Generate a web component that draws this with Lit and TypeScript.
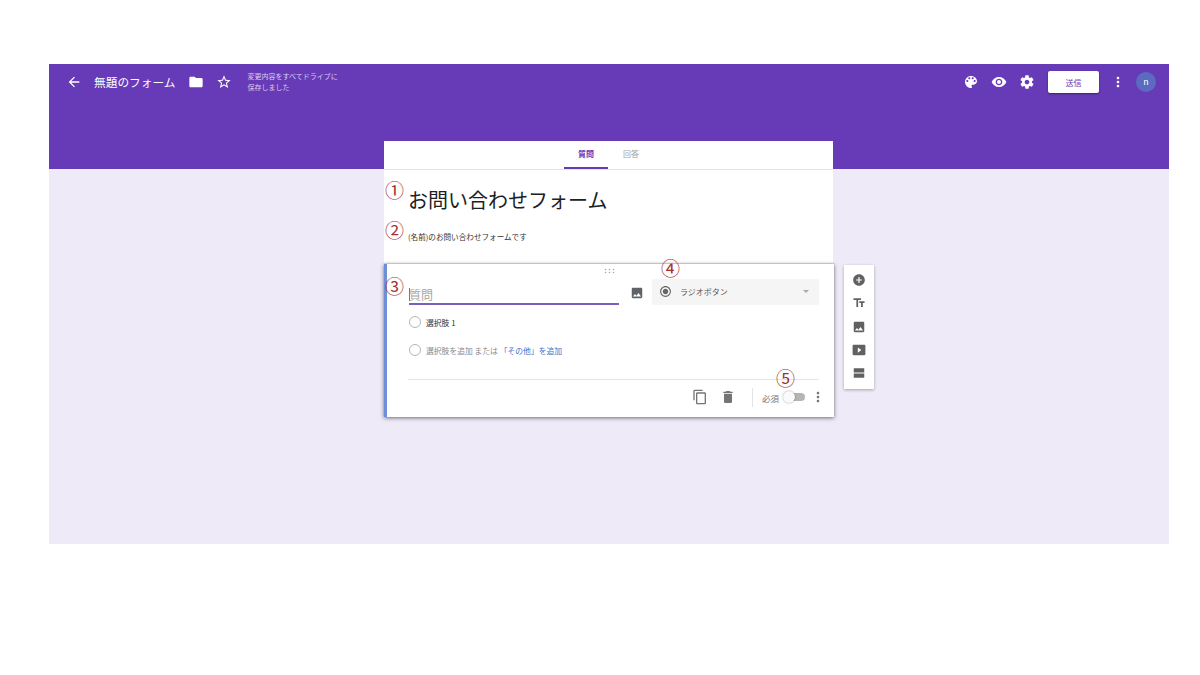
import { LitElement, html, css, svg } from "lit";
import { customElement } from "lit/decorators.js";

const P: Record<string, string> = {
  back: "M20 11H7.83l5.59-5.59L12 4l-8 8 8 8 1.41-1.41L7.83 13H20v-2z",
  folder: "M10 4H4c-1.1 0-1.99.9-1.99 2L2 18c0 1.1.9 2 2 2h16c1.1 0 2-.9 2-2V8c0-1.1-.9-2-2-2h-8l-2-2z",
  star: "M22 9.24l-7.19-.62L12 2 9.19 8.63 2 9.24l5.46 4.73L5.82 21 12 17.27 18.18 21l-1.63-7.03L22 9.24zM12 15.4l-3.76 2.27 1-4.28-3.32-2.88 4.38-.38L12 6.1l1.71 4.04 4.38.38-3.32 2.88 1 4.28L12 15.4z",
  palette: "M12 3c-4.97 0-9 4.03-9 9s4.03 9 9 9c.83 0 1.5-.67 1.5-1.5 0-.39-.15-.74-.39-1.01-.23-.26-.38-.61-.38-.99 0-.83.67-1.5 1.5-1.5H16c2.76 0 5-2.24 5-5 0-4.42-4.03-8-9-8zm-5.5 9c-.83 0-1.5-.67-1.5-1.5S5.67 9 6.5 9 8 9.67 8 10.5 7.33 12 6.5 12zm3-4C8.67 8 8 7.33 8 6.5S8.67 5 9.5 5s1.5.67 1.5 1.5S10.33 8 9.5 8zm5 0c-.83 0-1.5-.67-1.5-1.5S13.67 5 14.5 5s1.5.67 1.5 1.5S15.33 8 14.5 8zm3 4c-.83 0-1.5-.67-1.5-1.5S16.67 9 17.5 9s1.5.67 1.5 1.5-.67 1.5-1.5 1.5z",
  eye: "M12 4.5C7 4.5 2.73 7.61 1 12c1.73 4.39 6 7.5 11 7.5s9.27-3.11 11-7.5c-1.73-4.39-6-7.5-11-7.5zM12 17c-2.76 0-5-2.24-5-5s2.24-5 5-5 5 2.24 5 5-2.24 5-5 5zm0-8c-1.66 0-3 1.34-3 3s1.34 3 3 3 3-1.34 3-3-1.34-3-3-3z",
  gear: "M19.43 12.98c.04-.32.07-.64.07-.98s-.03-.66-.07-.98l2.11-1.65c.19-.15.24-.42.12-.64l-2-3.46c-.12-.22-.39-.3-.61-.22l-2.49 1c-.52-.4-1.08-.73-1.69-.98l-.38-2.65C14.46 2.18 14.25 2 14 2h-4c-.25 0-.46.18-.49.42l-.38 2.65c-.61.25-1.17.59-1.69.98l-2.49-1c-.23-.09-.49 0-.61.22l-2 3.46c-.13.22-.07.49.12.64l2.11 1.65c-.04.32-.07.65-.07.98s.03.66.07.98l-2.11 1.65c-.19.15-.24.42-.12.64l2 3.46c.12.22.39.3.61.22l2.49-1c.52.4 1.08.73 1.69.98l.38 2.65c.03.24.24.42.49.42h4c.25 0 .46-.18.49-.42l.38-2.65c.61-.25 1.17-.59 1.69-.98l2.49 1c.23.09.49 0 .61-.22l2-3.46c.12-.22.07-.49-.12-.64l-2.11-1.65zM12 15.5c-1.93 0-3.5-1.57-3.5-3.5s1.57-3.5 3.5-3.5 3.5 1.57 3.5 3.5-1.57 3.5-3.5 3.5z",
  more: "M12 8c1.1 0 2-.9 2-2s-.9-2-2-2-2 .9-2 2 .9 2 2 2zm0 2c-1.1 0-2 .9-2 2s.9 2 2 2 2-.9 2-2-.9-2-2-2zm0 6c-1.1 0-2 .9-2 2s.9 2 2 2 2-.9 2-2-.9-2-2-2z",
  image: "M21 19V5c0-1.1-.9-2-2-2H5c-1.1 0-2 .9-2 2v14c0 1.1.9 2 2 2h14c1.1 0 2-.9 2-2zM8.5 13.5l2.5 3.01L14.5 12l4.5 6H5l3.5-4.5z",
  copy: "M16 1H4c-1.1 0-2 .9-2 2v14h2V3h12V1zm3 4H8c-1.1 0-2 .9-2 2v14c0 1.1.9 2 2 2h11c1.1 0 2-.9 2-2V7c0-1.1-.9-2-2-2zm0 16H8V7h11v14z",
  trash: "M6 19c0 1.1.9 2 2 2h8c1.1 0 2-.9 2-2V7H6v12zM19 4h-3.5l-1-1h-5l-1 1H5v2h14V4z",
  add: "M12 2C6.48 2 2 6.48 2 12s4.48 10 10 10 10-4.48 10-10S17.52 2 12 2zm5 11h-4v4h-2v-4H7v-2h4V7h2v4h4v2z",
  title: "M2.5 4v3h5v12h3V7h5V4h-13zm19 5h-9v3h3v7h3v-7h3V9z",
  video: "M21 3H3c-1.1 0-2 .9-2 2v14c0 1.1.9 2 2 2h18c1.1 0 2-.9 2-2V5c0-1.1-.9-2-2-2zM10 16.5v-9l6 4.5-6 4.5z",
  section: "M3 4h18v7H3zM3 13h18v7H3z",
  radio: "M12 7c-2.76 0-5 2.24-5 5s2.24 5 5 5 5-2.24 5-5-2.24-5-5-5zm0-5C6.48 2 2 6.48 2 12s4.48 10 10 10 10-4.48 10-10S17.52 2 12 2zm0 18c-4.42 0-8-3.58-8-8s3.58-8 8-8 8 3.58 8 8-3.58 8-8 8z",
};

const icon = (n: string) =>
  html`<svg class="ic" viewBox="0 0 24 24" fill="currentColor">${svg`<path fill-rule="evenodd" d=${P[n]}></path>`}</svg>`;

@customElement("app-root")
export class AppRoot extends LitElement {
  static styles = css`
    :host {
      display: block;
      height: 675px;
      background: #fff;
      font-family: "Noto Sans CJK JP", "Liberation Sans", sans-serif;
    }
    * { box-sizing: border-box; }
    .page { padding: 64px 31px 0 49px; }
    .app {
      position: relative;
      width: 1120px;
      height: 480px;
      background: #eeeaf8;
      overflow: hidden;
    }
    .ic { display: block; width: 16px; height: 16px; flex: none; }
    .band { height: 105px; background: #673ab7; color: #fff; }
    .top { display: flex; align-items: center; height: 36px; padding: 0 13px 0 17px; }
    .fname { font-size: 11.7px; margin: -2px 13px 0 12px; white-space: nowrap; }
    .star { margin-left: 12px; }
    .saved { margin-left: 15px; font-size: 7px; line-height: 11px; color: #d9cdee; white-space: nowrap; }
    .right { margin-left: auto; display: flex; align-items: center; gap: 12px; }
    .send {
      width: 51px; height: 22px; margin: 0 -1px 0 1px;
      background: #fff; color: #673ab7; font-size: 8px;
      display: flex; align-items: center; justify-content: center;
      border-radius: 2px; box-shadow: 0 1px 2px rgba(0,0,0,.4);
    }
    .avatar {
      width: 20px; height: 20px; margin-left: -2px; border-radius: 50%;
      background: #5c6bc0; color: #fff; font-size: 9px;
      font-family: "Roboto", sans-serif;
      display: flex; align-items: center; justify-content: center;
    }
    .main {
      display: grid;
      grid-template-columns: 450px 30px;
      column-gap: 10px;
      justify-content: start;
      align-items: start;
      margin: -28px 0 0 335px;
    }
    .head { width: 449px; height: 123px; background: #fff; }
    .tabs {
      display: flex; justify-content: center; gap: 1px;
      height: 29px; border-bottom: 1px solid #e4e4e4;
    }
    .tab {
      width: 44px; height: 28px; font-size: 8px; color: #9e9e9e;
      display: flex; align-items: center; justify-content: center;
      border-bottom: 2px solid transparent; padding-bottom: 2px;
    }
    .tab.on { color: #673ab7; font-weight: 700; border-bottom-color: #673ab7; }
    .info { padding: 15px 0 0 24px; }
    .ftitle { font-size: 20px; line-height: 29px; color: #202124; white-space: nowrap; }
    .fdesc { font-size: 7.6px; line-height: 12px; margin-top: 17px; color: #333; white-space: nowrap; }
    .q {
      grid-column: 1; width: 450px; height: 153px; background: #fff;
      border-left: 3px solid #6d8fd6;
      box-shadow: 0 1px 4px rgba(0,0,0,.55), 0 -1px 1px rgba(0,0,0,.12);
      padding-left: 22px;
    }
    .drag { display: flex; justify-content: center; height: 15px; padding: 4px 0 0 0; margin: 0 24px 0 0; }
    .drag svg { width: 11px; height: 6px; display: block; fill: #aaa; }
    .qrow { display: flex; align-items: flex-start; height: 26px; }
    .qinput {
      width: 210px; height: 26px; border-bottom: 2px solid #7b5fb8;
      font-size: 12px; color: #a6a6a6; display: flex; align-items: flex-end;
      line-height: 17px;
    }
    .cursor { width: 1px; height: 13px; margin: 0 -1px 2px 0; background: #777; }
    .qimg { width: 14px; height: 14px; margin: 7px 8px 0 11px; color: #5f6368; }
    .qimg .ic { width: 14px; height: 14px; }
    .select {
      width: 167px; height: 26px; background: #f5f5f5; border-radius: 2px;
      display: flex; align-items: center; padding: 0 10px 2px 7px;
      font-size: 8px; color: #555; gap: 8px;
    }
    .select .ic { width: 13px; height: 13px; color: #666; }
    .caret { margin-left: auto; width: 0; height: 0; border: 3.5px solid transparent; border-top: 3.5px solid #aaa; border-bottom: 0; }
    .opts { margin-top: 3px; }
    .opt { display: flex; align-items: center; height: 28px; gap: 5px; font-size: 7.8px; color: #333; }
    .circle { width: 12px; height: 12px; border-radius: 50%; border: 1.2px solid #b5b5b5; flex: none; }
    .muted { color: #8a8a8a; }
    .link { color: #3f6fc4; }
    .rule { height: 1px; background: #e4e4e4; margin: 15px 15px 0 -1px; }
    .foot { display: flex; align-items: center; justify-content: flex-end; height: 34px; padding-right: 8px; color: #757575; }
    .foot .copy { margin-right: 12px; }
    .vr { width: 1px; height: 19px; background: #e4e4e4; margin: 0 9px 0 16px; }
    .req { font-size: 8.5px; color: #777; margin-right: 4px; padding-top: 1px; }
    .toggle { position: relative; width: 22px; height: 12px; margin-right: 5px; display: flex; align-items: center; }
    .track { width: 20px; height: 8px; margin-left: 2px; border-radius: 4px; background: #b5b5b5; }
    .knob { position: absolute; left: 0; top: 0; width: 12px; height: 12px; border-radius: 50%; background: #fafafa; box-shadow: 0 0 2px rgba(0,0,0,.4); }
    .tools {
      grid-column: 2; grid-row: 1 / span 2; margin-top: 124px;
      width: 30px; height: 124px; background: #fff;
      box-shadow: 0 1px 3px rgba(0,0,0,.3);
      display: flex; flex-direction: column; align-items: center;
      gap: 9.25px; padding-top: 8px; color: #616161;
    }
    .tools .ic { width: 14px; height: 14px; }
    .num { position: absolute; font-size: 19px; line-height: 24px; color: #a3302c; }
    .n1 { left: 336px; top: 114px; }
    .n2 { left: 336px; top: 154px; }
    .n3 { left: 336px; top: 210px; }
    .n4 { left: 612px; top: 192px; }
    .n5 { left: 727px; top: 302px; }
  `;

  render() {
    return html`
      <div class="page">
        <div class="app">
          <div class="band">
            <div class="top">
              ${icon("back")}
              <span class="fname">無題のフォーム</span>
              ${icon("folder")}
              <span class="star">${icon("star")}</span>
              <div class="saved">変更内容をすべてドライブに<br />保存しました</div>
              <div class="right">
                ${icon("palette")}${icon("eye")}${icon("gear")}
                <div class="send">送信</div>
                ${icon("more")}
                <div class="avatar">n</div>
              </div>
            </div>
          </div>
          <div class="main">
            <div class="head">
              <div class="tabs">
                <div class="tab on">質問</div>
                <div class="tab">回答</div>
              </div>
              <div class="info">
                <div class="ftitle">お問い合わせフォーム</div>
                <div class="fdesc">(名前)のお問い合わせフォームです</div>
              </div>
            </div>
            <div class="q">
              <div class="drag">
                <svg viewBox="0 0 11 6">
                  <circle cx="1.5" cy="1.5" r=".8"></circle><circle cx="5.5" cy="1.5" r=".8"></circle><circle cx="9.5" cy="1.5" r=".8"></circle>
                  <circle cx="1.5" cy="4.5" r=".8"></circle><circle cx="5.5" cy="4.5" r=".8"></circle><circle cx="9.5" cy="4.5" r=".8"></circle>
                </svg>
              </div>
              <div class="qrow">
                <div class="qinput"><span class="cursor"></span>質問</div>
                <div class="qimg">${icon("image")}</div>
                <div class="select">${icon("radio")}<span>ラジオボタン</span><span class="caret"></span></div>
              </div>
              <div class="opts">
                <div class="opt"><span class="circle"></span><span>選択肢 1</span></div>
                <div class="opt">
                  <span class="circle"></span>
                  <span class="muted">選択肢を追加 または <span class="link">「その他」を追加</span></span>
                </div>
              </div>
              <div class="rule"></div>
              <div class="foot">
                <span class="copy">${icon("copy")}</span>
                ${icon("trash")}
                <span class="vr"></span>
                <span class="req">必須</span>
                <span class="toggle"><span class="track"></span><span class="knob"></span></span>
                ${icon("more")}
              </div>
            </div>
            <div class="tools">
              ${icon("add")}${icon("title")}${icon("image")}${icon("video")}${icon("section")}
            </div>
          </div>
          <span class="num n1">①</span>
          <span class="num n2">②</span>
          <span class="num n3">③</span>
          <span class="num n4">④</span>
          <span class="num n5">⑤</span>
        </div>
      </div>
    `;
  }
}
